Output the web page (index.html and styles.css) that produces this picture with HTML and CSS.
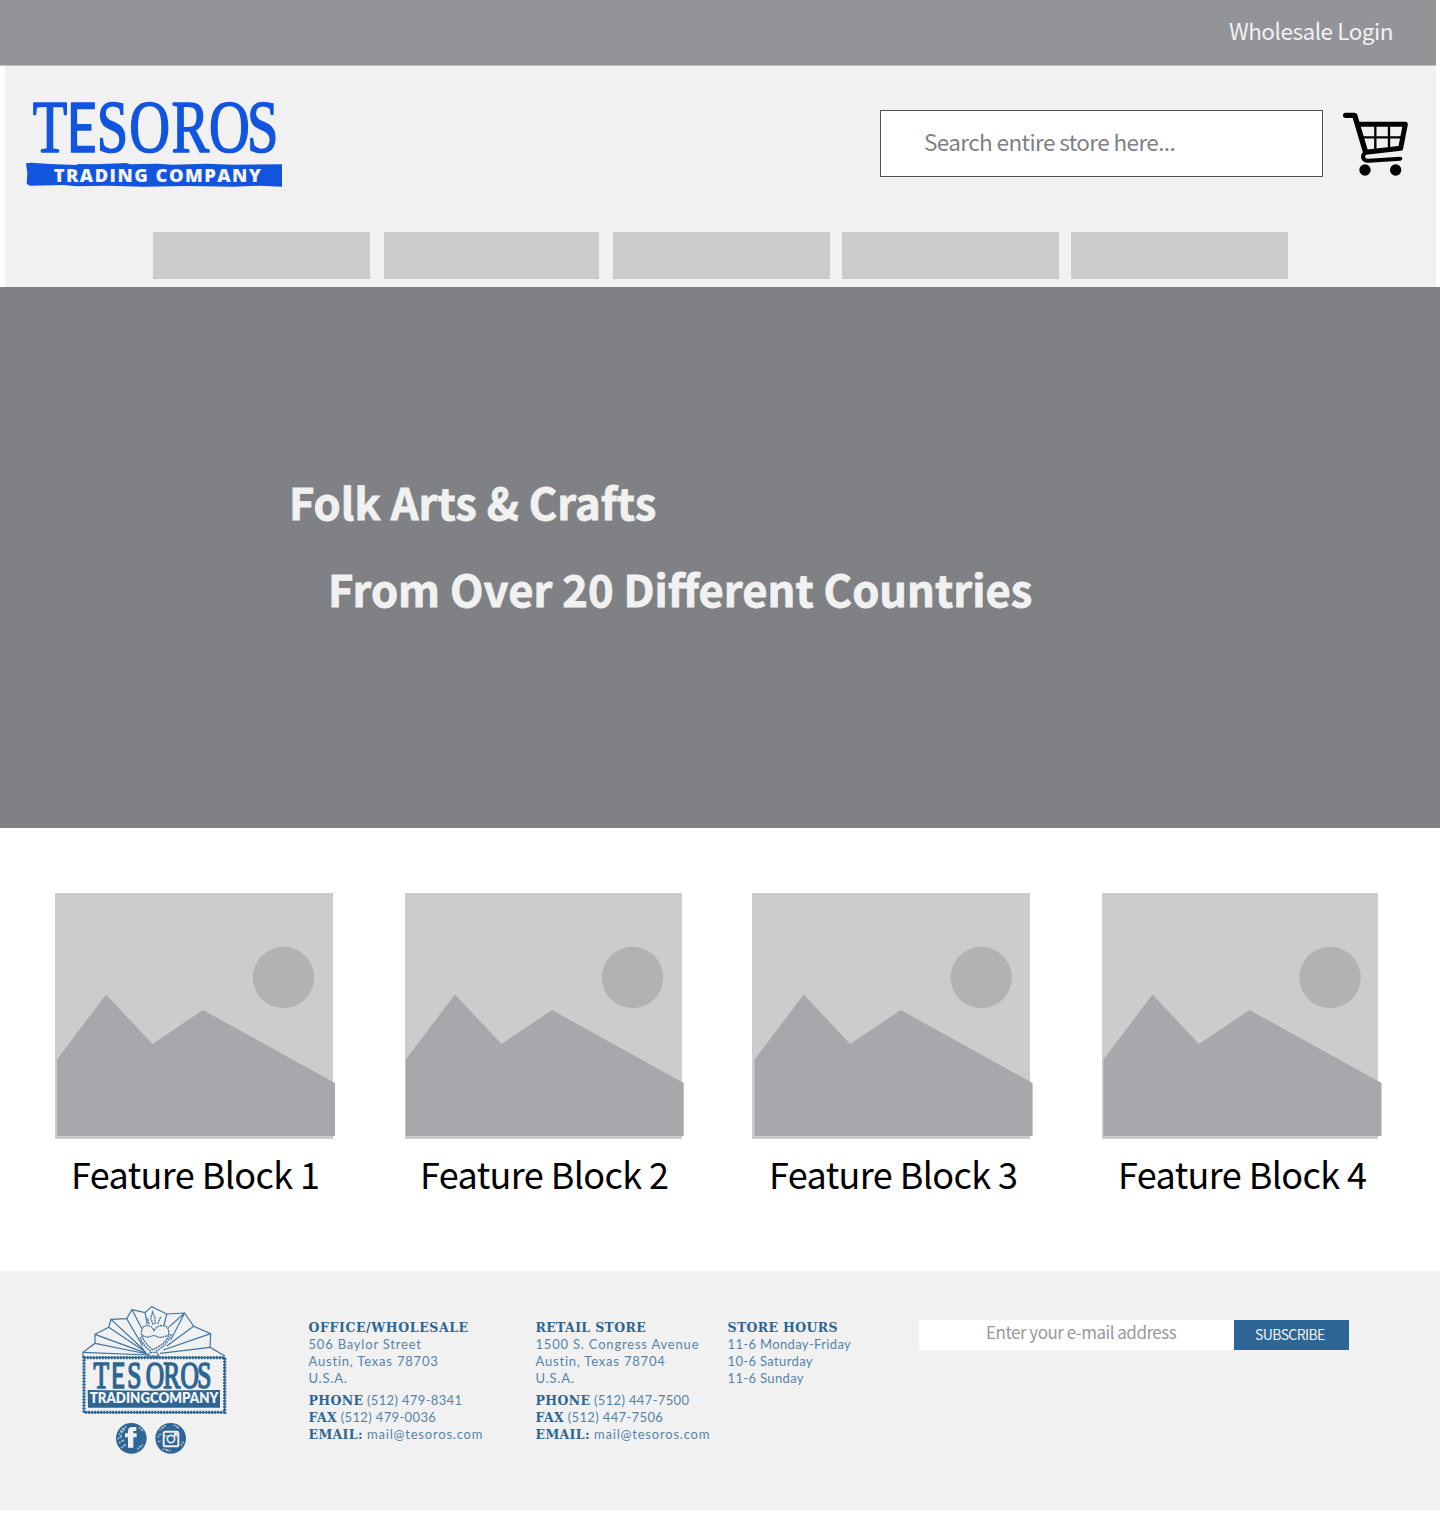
FILE: index.html
```html
<!DOCTYPE html>
<html lang="en">
<head>
<meta charset="utf-8">
<title>Tesoros Trading Company</title>
<link rel="stylesheet" href="styles.css">
</head>
<body>
<div class="topbar"><a class="login">Wholesale Login</a></div>
<header class="header">
  <div class="masthead">
    <svg class="logo" viewBox="75 150 775 265">
      <g transform="scale(.77 1)"><text class="logo-name" y="305" x="128 260 377 504 668 814 962">T<tspan class="logo-e">E</tspan>SOROS</text></g>
      <path class="logo-band" d="M78 340L95 338L150 342L228 345L235 342L290 343L380 339L390 343L470 341L520 344L620 341L700 344L846 343V410L780 407L700 410L560 408L430 410L320 407L230 409L190 405L90 407L80 402L82 370Z"/>
      <text class="logo-sub" x="161" y="396" textLength="622">TRADING COMPANY</text>
    </svg>
    <div class="search">Search entire store here...</div>
    <svg class="cart" viewBox="425 330 205 200">
      <g fill="none" stroke="#000" stroke-linecap="round" stroke-linejoin="round">
        <path stroke-width="16" d="M436 346H463L495 454"/>
        <path stroke-width="15" d="M473 373H615L601 445L496 457"/>
        <path stroke-width="12" d="M494 459Q486 465 489 475Q493 483 505 482L600 476"/>
        <path stroke-width="7" d="M525 375V452M566 375V448M484 412H608"/>
      </g>
      <circle cx="494" cy="510" r="17"/><circle cx="586" cy="510" r="17"/>
    </svg>
  </div>
  <nav class="nav"><span></span><span></span><span></span><span></span><span></span></nav>
</header>
<section class="hero">
  <h1>Folk Arts &amp; Crafts</h1>
  <h2>From Over 20 Different Countries</h2>
</section>
<main class="features">
  <article class="feature">
    <svg class="thumb" viewBox="0 0 280 246"><rect class="sky" width="278" height="246"/><circle class="sun" cx="228.5" cy="84.5" r="30.7"/><path class="hills" d="M2 166.500L51 101.500L97.500 151L148 117L280 190V243H2Z"/></svg>
    <h3>Feature Block 1</h3>
  </article>
  <article class="feature">
    <svg class="thumb" viewBox="0 0 280 246"><rect class="sky" x="1" width="277" height="246"/><circle class="sun" cx="228.5" cy="84.5" r="30.7"/><path class="hills" d="M1.700 166.500L51 101.500L97.500 151L148 117L279.700 190V243H1.700Z"/></svg>
    <h3>Feature Block 2</h3>
  </article>
  <article class="feature">
    <svg class="thumb" viewBox="0 0 280 246"><rect class="sky" x="-1" width="278" height="246"/><circle class="sun" cx="228.2" cy="84.5" r="30.7"/><path class="hills" d="M1.600 166.500L50.700 101.500L97.200 151L147.700 117L279.600 190V243H1.600Z"/></svg>
    <h3>Feature Block 3</h3>
  </article>
  <article class="feature">
    <svg class="thumb" viewBox="0 0 280 246"><rect class="sky" width="276" height="246"/><circle class="sun" cx="228" cy="84.5" r="30.7"/><path class="hills" d="M1.500 166.500L50.500 101.500L97 151L147.500 117L279.500 190V243H1.500Z"/></svg>
    <h3>Feature Block 4</h3>
  </article>
</main>
<footer class="footer">
  <svg class="badge" viewBox="60 45 450 450">
    <g class="line">
      <path d="M69 200V187L105 160V133L146 112L153 88L200 86L216 59L255 68L275 50L320 72L374 69L401 109L452 131L450 172L495 198"/>
      <path d="M69 187L265 195M105 160L262 192M105 133L260 190M146 112L258 187M153 88L252 180M200 86L248 168M216 59L245 115M255 68L262 104M320 72L312 106M374 69L325 113M374 69L332 150M401 109L320 168M452 131L310 180M450 172L300 190"/>
    </g>
    <g class="line heart">
      <path d="M279 179Q255 162 246 139Q240 112 258 107Q275 105 282 122Q293 104 312 107Q331 112 325 138Q316 162 279 179Z"/>
      <path d="M273 184Q247 166 240 140M288 184Q322 165 334 132M246 137L263 142L282 136L300 143L326 136M270 188L290 187L297 198H262ZM267 101L262 83M279 104L272 84L278 66L285 84V104M293 101L303 78"/>
    </g>
    <rect class="rope" x="72" y="203" width="422" height="164"/>
    <rect class="rope-core" x="72" y="203" width="422" height="164"/>
    <g transform="scale(.67 1)"><text class="badge-name" y="293" x="150 230 301 384 462 539 615">T<tspan class="badge-e">E</tspan>SOROS</text></g>
    <path fill="#2d6594" d="M83 300L250 302L480 300V353H84Z"/>
    <text class="badge-sub" x="89" y="338" textLength="386" lengthAdjust="spacingAndGlyphs">TRADINGCOMPANY</text>
    <g fill="#2d6594"><circle cx="214" cy="445" r="46"/><circle cx="332" cy="445" r="46"/></g>
    <g class="scratch">
      <path d="M180 424L200 408M177 434L194 418M173 448L187 435M177 459L193 449M184 474L197 463M232 477L249 464M237 412L249 423M298 421L318 406M293 442L302 431M294 456L302 451M342 405L358 415M363 467L370 455M308 477L332 483"/>
    </g>
    <path fill="#f1f1f1" d="M204 473V442H195V430H204V423Q204 411 217 411H229V423H220V430H230V442H220V473Z"/>
    <rect x="311" y="425" width="44" height="44" rx="5" fill="none" stroke="#f1f1f1" stroke-width="6"/>
    <circle cx="333" cy="447" r="11" fill="none" stroke="#f1f1f1" stroke-width="5"/>
    <rect x="342" y="428" width="9" height="9" fill="#f1f1f1"/><path stroke="#f1f1f1" stroke-width="3" d="M313 438H323M343 438H353"/>
  </svg>
  <address class="contact office">
    <strong>OFFICE/WHOLESALE</strong>
    <p class="wide">506 Baylor Street</p><p class="wide">Austin, Texas 78703</p><p class="wide">U.S.A.</p>
    <p class="gap"><b>PHONE</b> (512) 479-8341</p><p><b>FAX</b> (512) 479-0036</p><p class="wide"><b>EMAIL:</b> mail@tesoros.com</p>
  </address>
  <address class="contact retail">
    <strong>RETAIL STORE</strong>
    <p class="wide">1500 S. Congress Avenue</p><p class="wide">Austin, Texas 78704</p><p class="wide">U.S.A.</p>
    <p class="gap"><b>PHONE</b> (512) 447-7500</p><p><b>FAX</b> (512) 447-7506</p><p class="wide"><b>EMAIL:</b> mail@tesoros.com</p>
  </address>
  <div class="contact hours">
    <strong>STORE HOURS</strong>
    <p>11-6 Monday-Friday</p><p>10-6 Saturday</p><p>11-6 Sunday</p>
  </div>
  <div class="signup"><span class="email">Enter your e-mail address</span><span class="subscribe">SUBSCRIBE</span></div>
</footer>
</body>
</html>
```
FILE: styles.css
```css
* { box-sizing: border-box; }
body { margin: 0; background: #fff; font-family: "Noto Sans CJK SC", "Open Sans", sans-serif; width: 1440px; }
h1, h2, h3, p { margin: 0; }
svg { display: block; flex: none; overflow: visible; }

.topbar { width: 1436px; height: 66px; background: #939498; border-bottom: 1px solid #bfbfc3; display: flex; justify-content: flex-end; padding-right: 43px; }
.login { color: #f1f1f2; font-size: 22.5px; line-height: 60px; letter-spacing: -.47px; }

.header { width: 1431px; height: 221px; margin-left: 5px; background: #f1f1f1; }
.masthead { display: flex; align-items: flex-start; padding: 34px 0 0 20px; height: 166px; }
.logo { width: 258.33px; height: 88.33px; }
.logo-name { font: 220px "Liberation Serif", serif; fill: #1155df; stroke: #1155df; stroke-width: 5px; stroke-linejoin: round; }
.logo-e { font: 201px Lato, sans-serif; }
.logo-band { fill: #1155df; }
.logo-sub { font: 800 55px "Open Sans", sans-serif; fill: #f4f4f4; }
.search { width: 443px; height: 67px; margin: 10px 0 0 596.67px; background: #fff; border: 1px solid #505153; padding-left: 43px; color: #808184; font-size: 22.5px; line-height: 60px; letter-spacing: -.6px; }
.cart { width: 68.33px; height: 66.67px; margin: 10px 0 0 18.67px; }
.nav { display: flex; gap: 12px; padding-left: 148px; }
.nav span { width: 217px; height: 47px; background: #ccc; }
.nav span:nth-child(2) { width: 215px; margin: 0 2px; }

.hero { height: 541px; background: #808184; color: #f1f1f2; padding: 164.500px 0 0 289px; }
.hero h1, .hero h2 { font-size: 43.5px; font-weight: 700; line-height: 100px; height: 87.500px; white-space: nowrap; -webkit-text-stroke: .8px #f1f1f2; }
.hero h2 { padding-left: 39px; }

.features { height: 443px; padding: 65px 0 0 55px; display: flex; gap: 69px; }
.feature { width: 280px; }
.thumb { width: 280px; height: 246px; }
.sky { fill: #ccc; }
.sun { fill: #b2b2b2; }
.hills { fill: #a7a8ac; }
.feature h3 { font-size: 36px; font-weight: 400; line-height: 68px; letter-spacing: -.6px; padding-left: 16px; white-space: nowrap; color: #000; }

.footer { height: 240px; background: #f1f1f1; padding: 34px 0 0 80px; display: flex; align-items: flex-start; }
.badge { width: 150px; height: 150px; }
.line { fill: none; stroke: #3f739f; stroke-width: 3.5px; }
.heart { stroke-width: 4px; stroke-dasharray: 6 2; }
.rope { fill: none; stroke: #2d6594; stroke-width: 10px; stroke-dasharray: 5 4; }
.rope-core { fill: none; stroke: #2d6594; stroke-width: 4px; }
.badge-name { font: 114px "Liberation Serif", serif; fill: #2d6594; stroke: #2d6594; stroke-width: 5px; }
.badge-e { font: 105px Lato, sans-serif; }
.badge-sub { font: 800 42px Lato, sans-serif; fill: #f4f4f4; }
.scratch { fill: none; stroke: #aabfd2; stroke-width: 5px; stroke-dasharray: 5 3 9 2; }
.contact { font: 13px/17px Lato, sans-serif; letter-spacing: .35px; color: #5584aa; margin-top: 14px; white-space: nowrap; }
.contact strong, .contact b { font: 700 12.5px/17px "DejaVu Serif", serif; color: #2d6594; letter-spacing: .35px; }
.contact strong { display: block; }
.office strong { letter-spacing: .6px; }
.contact p { height: 16.8px; }
.contact .wide { letter-spacing: .8px; }
.contact .gap { margin-top: 6px; }
.office { width: 227px; margin-left: 78.500px; }
.retail { width: 192px; }
.hours { width: 191.500px; }
.signup { display: flex; margin-top: 15px; height: 30px; }
.email { width: 315px; background: #fff; color: #98999b; font-size: 17px; line-height: 23px; letter-spacing: -.5px; padding-left: 67px; }
.subscribe { width: 115px; background: #2d6594; color: #f1f1f2; font-size: 14px; line-height: 28px; letter-spacing: -.6px; padding-left: 21px; }
```
